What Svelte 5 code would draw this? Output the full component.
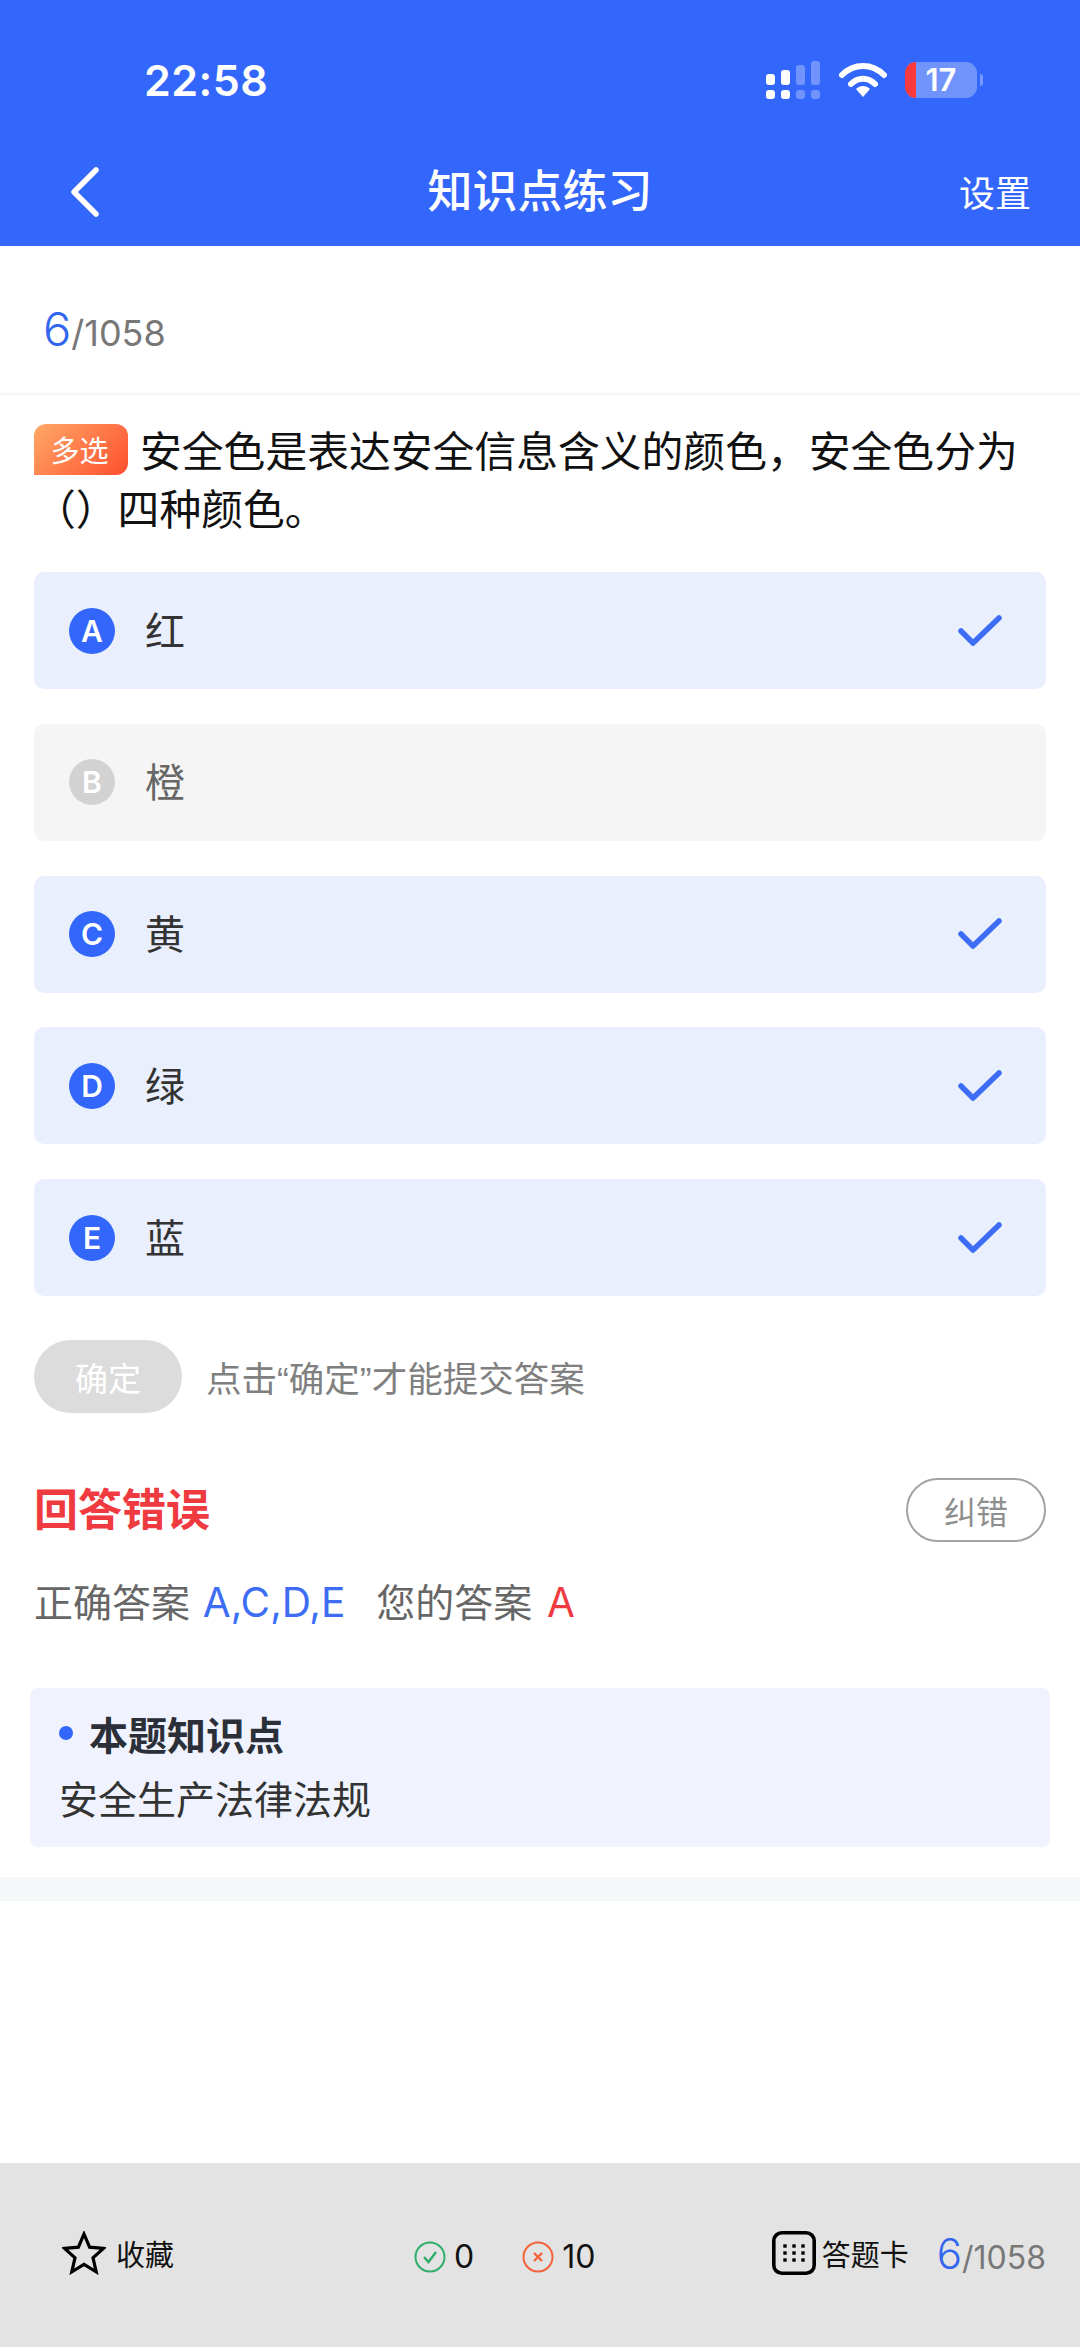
<script>
  const options = [
    { key: 'A', text: '红', on: true },
    { key: 'B', text: '橙', on: false },
    { key: 'C', text: '黄', on: true },
    { key: 'D', text: '绿', on: true },
    { key: 'E', text: '蓝', on: true }
  ]
</script>

<div class="page">
  <header class="head">
    <div class="status">
      <span class="time">22:58</span>
      <div class="status-icons">
        <svg class="signal" viewBox="0 0 54 38" width="54" height="38">
          <rect x="0" y="13" width="9" height="11" rx="3" fill="#fff"/>
          <rect x="15" y="9" width="9" height="15" rx="3" fill="#fff"/>
          <rect x="30" y="4" width="9" height="20" rx="3" fill="#fff" opacity="0.3"/>
          <rect x="45" y="0" width="9" height="24" rx="3" fill="#fff" opacity="0.3"/>
          <rect x="0" y="29" width="9" height="9" rx="3" fill="#fff"/>
          <rect x="15" y="29" width="9" height="9" rx="3" fill="#fff"/>
          <rect x="30" y="29" width="9" height="9" rx="3" fill="#fff" opacity="0.3"/>
          <rect x="45" y="29" width="9" height="9" rx="3" fill="#fff" opacity="0.3"/>
        </svg>
        <svg class="wifi" viewBox="0 0 48 36" width="48" height="36">
          <path d="M3 13 C15 1 33 1 45 13" fill="none" stroke="#fff" stroke-width="6" stroke-linecap="round"/>
          <path d="M12 22 C19 15 29 15 36 22" fill="none" stroke="#fff" stroke-width="6" stroke-linecap="round"/>
          <path d="M17 27 C21 23 27 23 31 27 L24 35 Z" fill="#fff"/>
        </svg>
        <div class="battery">
          <span class="level"></span>
          <span class="pct">17</span>
        </div>
        <span class="nub"></span>
      </div>
    </div>
    <nav class="nav">
      <svg class="back" viewBox="0 0 34 50" width="34" height="50">
        <polyline points="28,3 6,25 28,47" fill="none" stroke="#fff" stroke-width="5.5" stroke-linecap="round" stroke-linejoin="round"/>
      </svg>
      <h1>知识点练习</h1>
      <span class="setting">设置</span>
    </nav>
  </header>

  <div class="counter"><b>6</b>/1058</div>

  <main class="body">
    <p class="question"><span class="tag">多选</span>安全色是表达安全信息含义的颜色&#xFF0C;安全色分为<br/>&#xFF08;&#xFF09;四种颜色。</p>

    <ul class="options">
      {#each options as o}
        <li class="opt" class:on={o.on}>
          <span class="letter">{o.key}</span>
          <span class="label">{o.text}</span>
          {#if o.on}
            <svg class="check" viewBox="0 0 44 32" width="44" height="32">
              <polyline points="3,16 15,28 41,3" fill="none" stroke="#3d6df5" stroke-width="5.5" stroke-linecap="round" stroke-linejoin="round"/>
            </svg>
          {/if}
        </li>
      {/each}
    </ul>

    <div class="confirm">
      <span class="btn">确定</span>
      <span class="hint">点击“确定”才能提交答案</span>
    </div>

    <div class="result">
      <span class="wrong">回答错误</span>
      <span class="report">纠错</span>
    </div>

    <div class="answer">正确答案 <em class="blue">A,C,D,E</em><span class="mine">您的答案 <em class="red">A</em></span></div>
  </main>

  <section class="point">
    <div class="point-title"><i></i>本题知识点</div>
    <div class="point-text">安全生产法律法规</div>
  </section>

  <div class="band"></div>

  <footer class="foot">
    <div class="fav">
      <svg viewBox="0 0 44 44" width="44" height="44">
        <path d="M22 3 L27.6 16.2 L41.5 17.4 L31 26.8 L34.2 40.8 L22 33.4 L9.8 40.8 L13 26.8 L2.5 17.4 L16.4 16.2 Z" fill="none" stroke="#000" stroke-width="3.2" stroke-linejoin="miter"/>
      </svg>
      <span>收藏</span>
    </div>
    <div class="score">
      <svg viewBox="0 0 32 32" width="32" height="32">
        <circle cx="16" cy="16" r="14.5" fill="none" stroke="#2fae6b" stroke-width="2"/>
        <polyline points="10,16 14.5,21 22,11" fill="none" stroke="#2fae6b" stroke-width="2.4"/>
      </svg>
      <span class="num">0</span>
      <svg class="second" viewBox="0 0 32 32" width="32" height="32">
        <circle cx="16" cy="16" r="14.5" fill="none" stroke="#f4623a" stroke-width="2"/>
        <path d="M12 12 L20 20 M20 12 L12 20" fill="none" stroke="#f4623a" stroke-width="2.4"/>
      </svg>
      <span class="num">10</span>
    </div>
    <div class="card">
      <svg viewBox="0 0 44 44" width="44" height="44">
        <rect x="1.8" y="1.8" width="40.4" height="40.4" rx="8" fill="none" stroke="#000" stroke-width="3.6"/>
        <g fill="#000">
          {#each [15, 22, 29] as y}
            {#each [13, 22, 31] as x}
              <rect x={x - 1.7} y={y - 1.7} width="3.4" height="3.4"/>
            {/each}
          {/each}
        </g>
      </svg>
      <span class="card-text">答题卡</span>
      <span class="foot-count"><b>6</b>/1058</span>
    </div>
  </footer>
</div>

<style>
  :global(body) { margin: 0; background: #fff; }

  .page {
    width: 1080px;
    height: 2347px;
    display: flex;
    flex-direction: column;
    font-family: "Noto Sans CJK SC", "Liberation Sans", sans-serif;
    overflow: hidden;
  }

  .head {
    height: 246px;
    background: #3366fb;
    color: #fff;
    flex-shrink: 0;
  }
  .status {
    height: 156px;
    display: flex;
    align-items: center;
    justify-content: space-between;
    padding: 3px 97px 0 144px;
    box-sizing: border-box;
  }
  .time {
    font: 600 43px "Inter", "Liberation Sans", sans-serif;
    letter-spacing: 0.5px;
  }
  .status-icons { display: flex; align-items: center; }
  .signal { margin-right: 19px; }
  .wifi { margin-right: 18px; }
  .battery {
    position: relative;
    width: 72px;
    height: 36px;
    border-radius: 11px;
    background: rgba(255, 255, 255, 0.3);
    overflow: hidden;
    display: flex;
    align-items: center;
    justify-content: center;
  }
  .level {
    position: absolute;
    left: 0;
    top: 0;
    bottom: 0;
    width: 11px;
    background: #fb3a3f;
  }
  .pct {
    font: 600 31px "Inter", "Liberation Sans", sans-serif;
    color: #fff;
  }
  .nub {
    width: 3px;
    height: 12px;
    margin-left: 3px;
    background: rgba(255, 255, 255, 0.35);
    border-radius: 0 3px 3px 0;
  }

  .nav {
    height: 90px;
    display: flex;
    align-items: center;
    justify-content: center;
    position: relative;
  }
  .back { position: absolute; left: 68px; top: 11px; }
  .nav h1 {
    margin: 0;
    font-size: 45px;
    font-weight: 500;
    line-height: 1;
    position: relative;
    top: -13px;
  }
  .setting {
    position: absolute;
    right: 49px;
    top: 14px;
    font-size: 36px;
    line-height: 1.2;
  }

  .counter {
    height: 149px;
    padding: 38px 0 0 43px;
    box-sizing: border-box;
    border-bottom: 2px solid #f6f6f6;
    font: 36px "Inter", "Liberation Sans", sans-serif;
    color: #777;
    line-height: 90px;
    flex-shrink: 0;
  }
  .counter b { font-weight: 300; font-size: 47px; color: #3366ee; }

  .body { padding: 0 34px; }

  .question {
    margin: 25px 0 0;
    font-size: 41.8px;
    line-height: 58px;
    color: #111;
    white-space: nowrap;
  }
  .tag {
    display: inline-block;
    width: 94px;
    height: 51px;
    margin-right: 12px;
    padding-right: 3px;
    box-sizing: border-box;
    border-radius: 12px 12px 12px 0;
    background: linear-gradient(135deg, #ffa866, #ff4f2f);
    color: #fff;
    font-size: 29px;
    line-height: 51px;
    text-align: center;
    vertical-align: 2px;
    position: relative;
    top: -3px;
  }

  .options {
    list-style: none;
    margin: 36px 0 0;
    padding: 0;
    display: flex;
    flex-direction: column;
    gap: 34.8px;
  }
  .opt {
    height: 117px;
    border-radius: 10px;
    background: #f5f5f5;
    display: flex;
    align-items: center;
    padding: 0 44px 0 35px;
    color: #666;
  }
  .opt.on { background: #e9effd; color: #333; }
  .letter {
    width: 46px;
    height: 46px;
    border-radius: 50%;
    background: #d2d2d2;
    color: #fff;
    font: 600 30px "Inter", "Liberation Sans", sans-serif;
    display: flex;
    align-items: center;
    justify-content: center;
  }
  .on .letter { background: #3366fb; }
  .label {
    flex: 1;
    margin-left: 30px;
    font-size: 40px;
    line-height: 1;
    position: relative;
    top: -2px;
  }
  .check { flex-shrink: 0; }

  .confirm {
    margin-top: 44px;
    display: flex;
    align-items: center;
  }
  .btn {
    width: 148px;
    height: 73px;
    border-radius: 37px;
    background: #dcdcdc;
    color: #fff;
    font-size: 33px;
    display: flex;
    align-items: center;
    justify-content: center;
  }
  .hint {
    margin-left: 24px;
    font-family: "Liberation Sans", "Noto Sans CJK SC", sans-serif;
    font-size: 35.5px;
    color: #808080;
  }

  .result {
    margin-top: 65px;
    height: 64px;
    display: flex;
    align-items: center;
    justify-content: space-between;
  }
  .wrong {
    font-size: 44px;
    font-weight: 700;
    color: #ef3a3f;
    position: relative;
    top: -3px;
  }
  .report {
    width: 140px;
    height: 64px;
    box-sizing: border-box;
    border: 2.5px solid #a3a3a3;
    border-radius: 32px;
    color: #8f8f8f;
    font-size: 32px;
    display: flex;
    align-items: center;
    justify-content: center;
  }

  .answer {
    margin-top: 28px;
    font-size: 39px;
    line-height: 60px;
    color: #666;
    white-space: nowrap;
  }
  .answer em { font-style: normal; font-size: 40.5px; font-family: "Inter", "Liberation Sans", sans-serif; }
  .answer .blue { color: #3d6df5; margin-left: 4px; }
  .answer .red { color: #ef3a3f; margin-left: 6px; }
  .mine { margin-left: 31px; }

  .point {
    margin: 55px 30px 0;
    height: 159px;
    padding: 22px 29px 0;
    box-sizing: border-box;
    background: #f0f3fe;
    border-radius: 8px;
  }
  .point-title {
    display: flex;
    align-items: center;
    font-size: 39px;
    font-weight: 700;
    line-height: 46px;
    color: #2b2f38;
  }
  .point-title i {
    width: 14px;
    height: 14px;
    margin-right: 16px;
    border-radius: 50%;
    background: #3366fb;
  }
  .point-text {
    margin-top: 12px;
    font-size: 39px;
    line-height: 58px;
    color: #333;
  }

  .band {
    margin-top: 30px;
    height: 24px;
    background: #f5f8f8;
    flex-shrink: 0;
  }

  .foot {
    margin-top: auto;
    height: 184px;
    background: #e3e3e3;
    display: flex;
    align-items: center;
    justify-content: space-between;
    padding: 0 34px 4px 62px;
    box-sizing: border-box;
    flex-shrink: 0;
    color: #111;
    position: relative;
  }
  .fav, .card, .score { display: flex; align-items: center; }
  .fav span { margin-left: 10px; font-size: 29px; }
  .score {
    position: absolute;
    left: 414px;
    top: 74px;
  }
  .num { margin-left: 8px; font: 32px "Inter", "Liberation Sans", sans-serif; }
  .second { margin-left: 48px; }
  .card-text { margin-left: 6px; font-size: 29px; }
  .foot-count {
    margin-left: 28px;
    font: 32px "Inter", "Liberation Sans", sans-serif;
    color: #777;
  }
  .foot-count b { font-weight: 300; font-size: 42px; color: #3366ee; }
</style>
